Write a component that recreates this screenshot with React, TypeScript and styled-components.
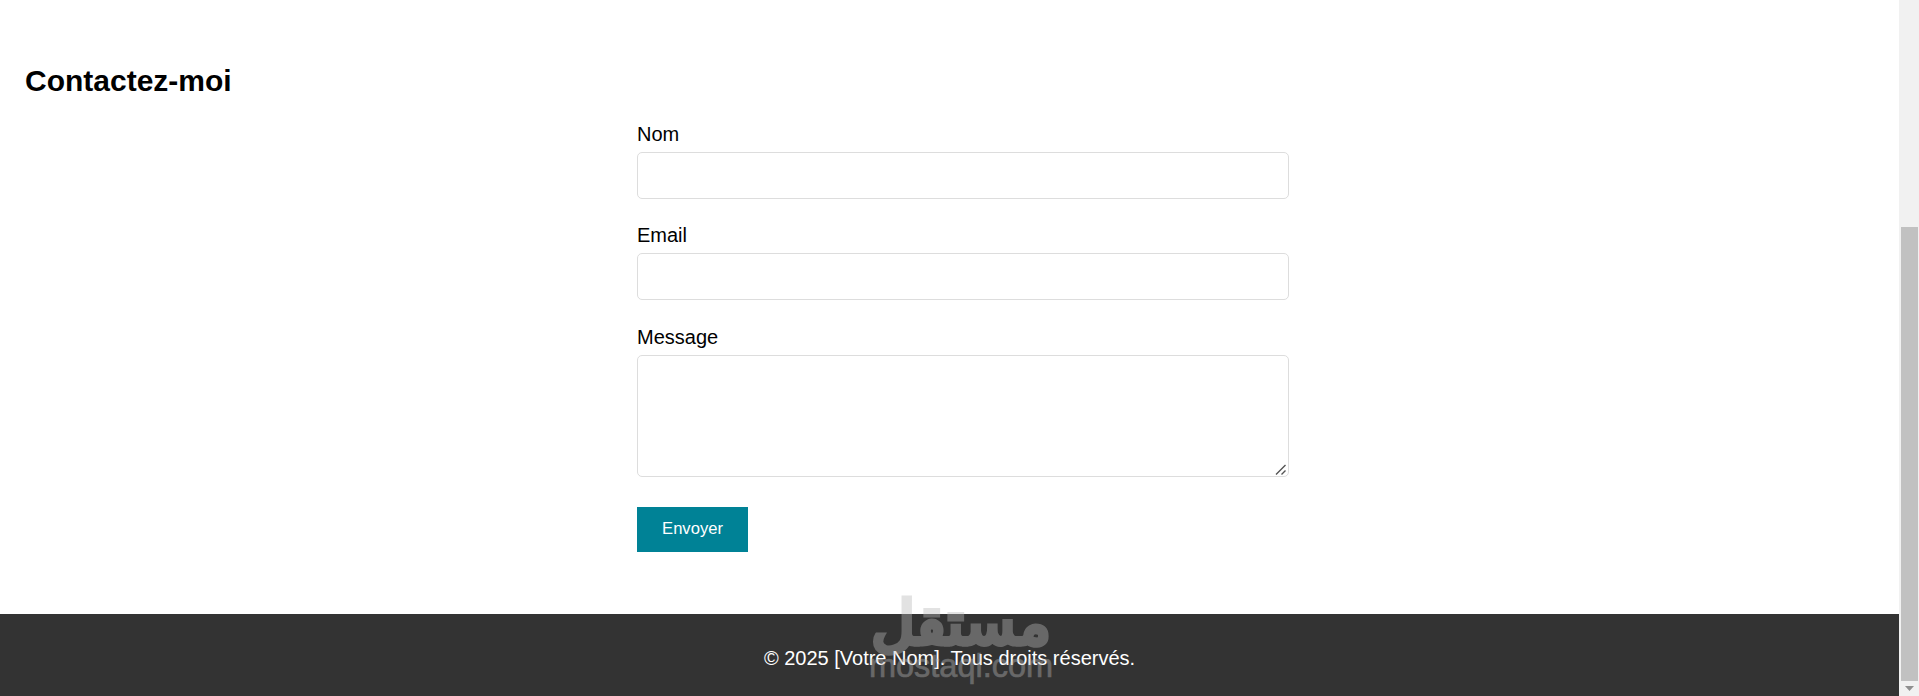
import React from "react";
import styled, { createGlobalStyle } from "styled-components";

const Global = createGlobalStyle`
  html, body { margin: 0; padding: 0; height: 696px; overflow: hidden; background: #fff; }
  body { font-family: "Liberation Sans", Arial, sans-serif; color: #000; }
`;
const Page = styled.div`
  display: flex;
  height: 696px;
`;
const Main = styled.div`
  position: relative;
  flex: 1;
  display: flex;
  flex-direction: column;
  min-width: 0;
`;
const Section = styled.section`
  flex: 1;
  padding: 62px 25px 0;
`;
const Heading = styled.h2`
  margin: 0 0 23.6px;
  font-size: 30px;
  line-height: 37px;
  font-weight: 700;
`;
const Form = styled.form`
  display: flex;
  flex-direction: column;
  width: 652px;
  margin-left: 612px;
`;
const Label = styled.label`
  font-size: 20px;
  line-height: 22px;
  margin-bottom: 7px;
`;
const Input = styled.input`
  box-sizing: border-box;
  height: 47px;
  margin-bottom: 25.5px;
  border: 1px solid #ddd;
  border-radius: 5px;
  background: #fff;
  outline: none;
`;
const AreaWrap = styled.div`
  position: relative;
  height: 122px;
  margin-bottom: 30px;
`;
const TextArea = styled.textarea`
  display: block;
  box-sizing: border-box;
  width: 100%;
  height: 100%;
  border: 1px solid #ddd;
  border-radius: 5px;
  background: #fff;
  outline: none;
  resize: none;
`;
const ResizeGrip = styled.svg`
  position: absolute;
  right: 2px;
  bottom: 2px;
  width: 12px;
  height: 12px;
  pointer-events: none;
`;
const Button = styled.button`
  width: 111px;
  height: 45px;
  padding: 0;
  border: none;
  background: #008296;
  color: #fff;
  font-family: inherit;
  font-size: 16.6px;
`;
const Footer = styled.footer`
  height: 82px;
  display: flex;
  align-items: center;
  justify-content: center;
  padding-top: 6px;
  box-sizing: border-box;
  background: #333;
  color: #fff;
  font-size: 20px;
`;
const Watermark = styled.div`
  position: absolute;
  left: 868px;
  top: 590px;
  width: 186px;
  display: flex;
  flex-direction: column;
  align-items: center;
  color: rgb(185, 185, 185);
  opacity: 0.4;
  pointer-events: none;
`;
const WatermarkArabic = styled.div`
  font-family: "DejaVu Sans", sans-serif;
  font-weight: 400;
  font-size: 60px;
  line-height: 66px;
  -webkit-text-stroke: 5px rgb(185, 185, 185);
`;
const WatermarkLatin = styled.div`
  font-size: 32.5px;
  line-height: 30px;
  margin-top: -5px;
  -webkit-text-stroke: 0.6px rgb(185, 185, 185);
`;
const ScrollTrack = styled.aside`
  width: 20px;
  display: flex;
  flex-direction: column;
  background: #f1f1f1;
`;
const ScrollThumb = styled.div`
  margin: 227px 1px 0 2px;
  height: 454px;
  background: #c1c1c1;
`;
const ArrowBox = styled.div`
  flex: 1;
  display: flex;
  align-items: center;
  justify-content: center;
`;

export default function App() {
  return (
    <Page>
      <Global />
      <Main>
        <Section>
          <Heading>Contactez-moi</Heading>
          <Form onSubmit={(e) => e.preventDefault()}>
            <Label>Nom</Label>
            <Input type="text" />
            <Label>Email</Label>
            <Input type="email" />
            <Label>Message</Label>
            <AreaWrap>
              <TextArea />
              <ResizeGrip viewBox="0 0 12 12">
                <path d="M1 11.5 10.5 2M6.5 11.5l4-4" stroke="#555" strokeWidth="1.4" fill="none" />
              </ResizeGrip>
            </AreaWrap>
            <div>
              <Button type="submit">Envoyer</Button>
            </div>
          </Form>
        </Section>
        <Footer>© 2025 [Votre Nom]. Tous droits réservés.</Footer>
        <Watermark>
          <WatermarkArabic>مستقل</WatermarkArabic>
          <WatermarkLatin>mostaql.com</WatermarkLatin>
        </Watermark>
      </Main>
      <ScrollTrack>
        <ScrollThumb />
        <ArrowBox>
          <svg width="9" height="5" viewBox="0 0 9 5"><path d="M0 0h9L4.5 5z" fill="#8f8f8f" /></svg>
        </ArrowBox>
      </ScrollTrack>
    </Page>
  );
}
